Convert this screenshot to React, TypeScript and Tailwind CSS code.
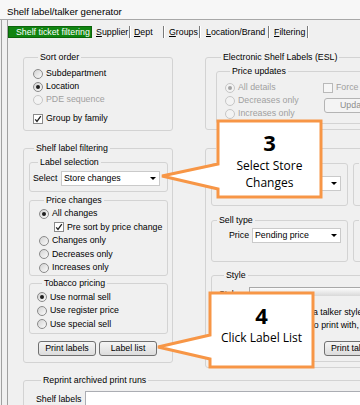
import React from "react";

type Kids = { children?: React.ReactNode };

function Radio({ on, off }: { on?: boolean; off?: boolean }) {
  return (
    <span
      className={
        off
          ? "flex h-[10px] w-[10px] shrink-0 items-center justify-center rounded-full border border-[#c6c6c6] bg-[#f3f3f3]"
          : "flex h-[10px] w-[10px] shrink-0 items-center justify-center rounded-full border border-[#8a8a8a] bg-[linear-gradient(135deg,#d2d2d2,#fbfbfb)]"
      }
    >
      {on && <span className={off ? "h-[4px] w-[4px] rounded-full bg-[#a4a4a4]" : "h-[4px] w-[4px] rounded-full bg-[#1e1e1e]"} />}
    </span>
  );
}

function Check({ on, off }: { on?: boolean; off?: boolean }) {
  return (
    <span
      className={
        off
          ? "flex h-[10px] w-[10px] shrink-0 items-center justify-center border border-[#b9b9b9] bg-[#f6f6f6]"
          : "flex h-[10px] w-[10px] shrink-0 items-center justify-center border border-[#8a8a8a] bg-white"
      }
    >
      {on && (
        <svg width="8" height="8" viewBox="0 0 8 8">
          <path d="M1.2 4.3 3 6.4 6.8 1.2" fill="none" stroke="#222" strokeWidth="1.3" />
        </svg>
      )}
    </span>
  );
}

function Opt({ label, on, off, box, className = "h-[13px]" }: { label: string; on?: boolean; off?: boolean; box?: boolean; className?: string }) {
  return (
    <div className={"flex items-center gap-[3px] " + className}>
      {box ? <Check on={on} off={off} /> : <Radio on={on} off={off} />}
      <span className={off ? "whitespace-nowrap text-[#a0a0a0]" : "whitespace-nowrap"}>{label}</span>
    </div>
  );
}

function Group({ title, className = "", children }: Kids & { title: string; className?: string }) {
  return (
    <fieldset className={"rounded-[3px] border border-[#d3d3d3] " + className}>
      <legend className="ml-[5px] whitespace-nowrap px-[2px] leading-[11px]">{title}</legend>
      {children}
    </fieldset>
  );
}

function Combo({ value, className = "" }: { value: string; className?: string }) {
  return (
    <div className={"flex h-[15px] items-center justify-between border border-[#cacaca] bg-white pl-[2px] pr-[3px] " + className}>
      <span className="whitespace-nowrap">{value}</span>
      <svg width="6" height="3" viewBox="0 0 6 3">
        <path d="M0 0h6L3 3z" fill="#000" />
      </svg>
    </div>
  );
}

function Btn({ children, off, className = "" }: Kids & { off?: boolean; className?: string }) {
  return (
    <button
      type="button"
      className={
        (off
          ? "flex h-[15px] items-center justify-center rounded-[3px] border border-[#b4b4b4] bg-[#f4f4f4] text-[#8d8d8d] "
          : "flex h-[15px] items-center justify-center rounded-[3px] border border-[#707070] bg-[linear-gradient(#f5f5f5,#dcdcdc)] ") + className
      }
    >
      {children}
    </button>
  );
}

function Tab({ first, rest, className }: { first: string; rest: string; className: string }) {
  return (
    <div className={"flex h-[12px] items-center justify-between " + className}>
      <span className="whitespace-nowrap leading-[12px]">
        <u>{first}</u>
        {rest}
      </span>
      <span className="block h-[12px] w-[2px] border-x border-l-[#7a7a7a] border-r-white" />
    </div>
  );
}

export default function App() {
  return (
    <div className="relative h-[405px] w-[360px] overflow-hidden bg-[#f0f0f0] font-['Liberation_Sans',Arial,sans-serif] text-[8.8px] text-black">
      <div className="h-[20px] border-b border-[#a8a8a8] bg-[#f7f7f7] pl-[7px] pt-[6px] text-[9.6px] leading-[12px]">
        Shelf label/talker generator
      </div>

      <div className="ml-[1px] border-l border-[#a0a0a0] pl-[5px]">
        <div className="h-[400px] border-l border-[#a0a0a0]">
          {/* tabs */}
          <div className="flex h-[18px] items-start pt-[6px]">
            <div className="h-[12px] w-[84px] whitespace-nowrap border border-[#0b640b] bg-[#108410] pl-[7px] leading-[10px] text-white">
              Shelf ticket filtering
            </div>
            <Tab first="S" rest="upplier" className="ml-[4px] w-[35px]" />
            <Tab first="D" rest="ept" className="ml-[3px] w-[31px]" />
            <Tab first="G" rest="roups" className="ml-[4px] w-[32px]" />
            <Tab first="L" rest="ocation/Brand" className="ml-[5px] w-[64px]" />
            <Tab first="F" rest="iltering" className="ml-[4px] w-[35px]" />
          </div>

          <div className="pl-[15px] pt-[14px]">
            <div className="flex">
              {/* left column */}
              <div className="flex w-[150px] shrink-0 flex-col">
                <Group title="Sort order" className="pb-[5px] pl-[9px] pt-[4px]">
                  <Opt label="Subdepartment" />
                  <Opt label="Location" on />
                  <Opt label="PDE sequence" off />
                  <Opt label="Group by family" box on className="mt-[6px] h-[13px]" />
                </Group>

                <Group title="Shelf label filtering" className="mt-[12px] pb-[6px] pl-[5px] pt-[3px]">
                  <Group title="Label selection" className="w-[139px] pb-[5px] pl-[3px] pt-[3px]">
                    <div className="flex items-center">
                      <span className="w-[28px]">Select</span>
                      <Combo value="Store changes" className="w-[99px]" />
                    </div>
                  </Group>

                  <Group title="Price changes" className="mt-[3px] w-[139px] pl-[9px] pt-[1px]">
                    <Opt label="All changes" on className="h-[13.5px]" />
                    <Opt label="Pre sort by price change" box on className="ml-[15px] h-[13.5px]" />
                    <Opt label="Changes only" className="h-[13.5px]" />
                    <Opt label="Decreases only" className="h-[13.5px]" />
                    <Opt label="Increases only" className="h-[13.5px]" />
                  </Group>

                  <Group title="Tobacco pricing" className="mt-[2px] w-[139px] pb-[2px] pl-[7px] pt-[2px]">
                    <Opt label="Use normal sell" on className="h-[13.5px]" />
                    <Opt label="Use register price" className="h-[13.5px]" />
                    <Opt label="Use special sell" className="h-[13.5px]" />
                  </Group>

                  <div className="ml-[9px] mt-[7px] flex gap-[3px]">
                    <Btn className="w-[58px]">Print labels</Btn>
                    <Btn className="w-[58px]">Label list</Btn>
                  </div>
                </Group>
              </div>

              {/* right column */}
              <div className="ml-[32px] flex w-[210px] shrink-0 flex-col">
                <Group title="Electronic Shelf Labels (ESL)" className="pb-[5px] pl-[10px] pt-[3px]">
                  <Group title="Price updates" className="pb-[3px] pl-[8px] pt-[4px]">
                    <div className="flex">
                      <div className="w-[98px] shrink-0">
                        <Opt label="All details" on off />
                        <Opt label="Decreases only" off />
                        <Opt label="Increases only" off />
                      </div>
                      <div className="flex flex-col">
                        <Opt label="Force update" box off />
                        <Btn off className="ml-[1px] mt-[4px] w-[60px] justify-start pl-[15px]">
                          Update
                        </Btn>
                      </div>
                    </div>
                  </Group>
                </Group>

                <Group title="Shelf label printing" className="mt-[13px] pb-[5px] pl-[5px] pt-[4px]">
                  <div className="flex">
                    <Group title="Label format" className="h-[48px] w-[137px] shrink-0 pt-[7px]">
                      <div className="flex items-center pl-[17px]">
                        <span className="w-[23px]">Type</span>
                        <Combo value="Standard" className="w-[89px]" />
                      </div>
                    </Group>
                    <Group title="Options" className="ml-[5px] h-[48px] w-[60px] shrink-0" />
                  </div>

                  <div className="mt-[9px] flex">
                    <Group title="Sell type" className="h-[47px] w-[137px] shrink-0 pt-[2px]">
                      <div className="flex items-center pl-[17px]">
                        <span className="w-[23px]">Price</span>
                        <Combo value="Pending price" className="w-[89px]" />
                      </div>
                    </Group>
                    <Group title="Dates" className="ml-[5px] h-[47px] w-[60px] shrink-0" />
                  </div>

                  <Group title="Style" className="mt-[8px] pb-[5px] pl-[7px] pt-[6px]">
                    <div className="flex items-start">
                      <span className="w-[30px] pt-[2px] leading-[11px]">Style</span>
                      <div className="h-[9px] flex-1 border-l border-t border-[#a9a9a9] bg-[linear-gradient(#fdfdfd,#d9d9d9)]" />
                    </div>
                    <div className="ml-[67px] mt-[6px] leading-[13px]">
                      <div className="whitespace-nowrap">Select a talker style for</div>
                      <div className="whitespace-nowrap">labels to print with, or</div>
                    </div>
                    <Btn className="ml-[105px] mt-[9px] w-[60px] justify-start pl-[6px]">Print talkers</Btn>
                  </Group>
                </Group>
              </div>
            </div>

            <Group title="Reprint archived print runs" className="mt-[7px] w-[420px] pl-[12px] pt-[5px]">
              <div className="flex h-[18px] items-center">
                <span className="w-[49px] whitespace-nowrap">Shelf labels</span>
                <div className="h-[18px] w-[330px] border border-[#abadb3] bg-white" />
              </div>
            </Group>
          </div>
        </div>
      </div>

      {/* callouts */}
      <svg className="absolute left-0 top-0" width="360" height="405" viewBox="0 0 360 405">
        <polygon
          points="218,121 321,121 321,197 218,197 218,189 162,176 218,164"
          fill="#fff"
          stroke="#f79646"
          strokeWidth="3"
        />
        <polygon
          points="210,293 313,293 313,367 210,367 210,359 158,347 210,335"
          fill="#fff"
          stroke="#f79646"
          strokeWidth="3"
        />
      </svg>
      <div className="absolute left-[218px] top-[121px] flex h-[76px] w-[103px] flex-col items-center pt-[10px] font-['Open_Sans',sans-serif] text-black">
        <span className="text-[22px] font-bold leading-[22px]">3</span>
        <span className="mt-[4px] text-[12px] leading-[17px]">Select Store</span>
        <span className="text-[12px] leading-[17px]">Changes</span>
      </div>
      <div className="absolute left-[210px] top-[293px] flex h-[74px] w-[103px] flex-col items-center pt-[11px] font-['Open_Sans',sans-serif] text-black">
        <span className="text-[22px] font-bold leading-[22px]">4</span>
        <span className="mt-[3px] text-[12px] leading-[17px]">Click Label List</span>
      </div>
    </div>
  );
}
